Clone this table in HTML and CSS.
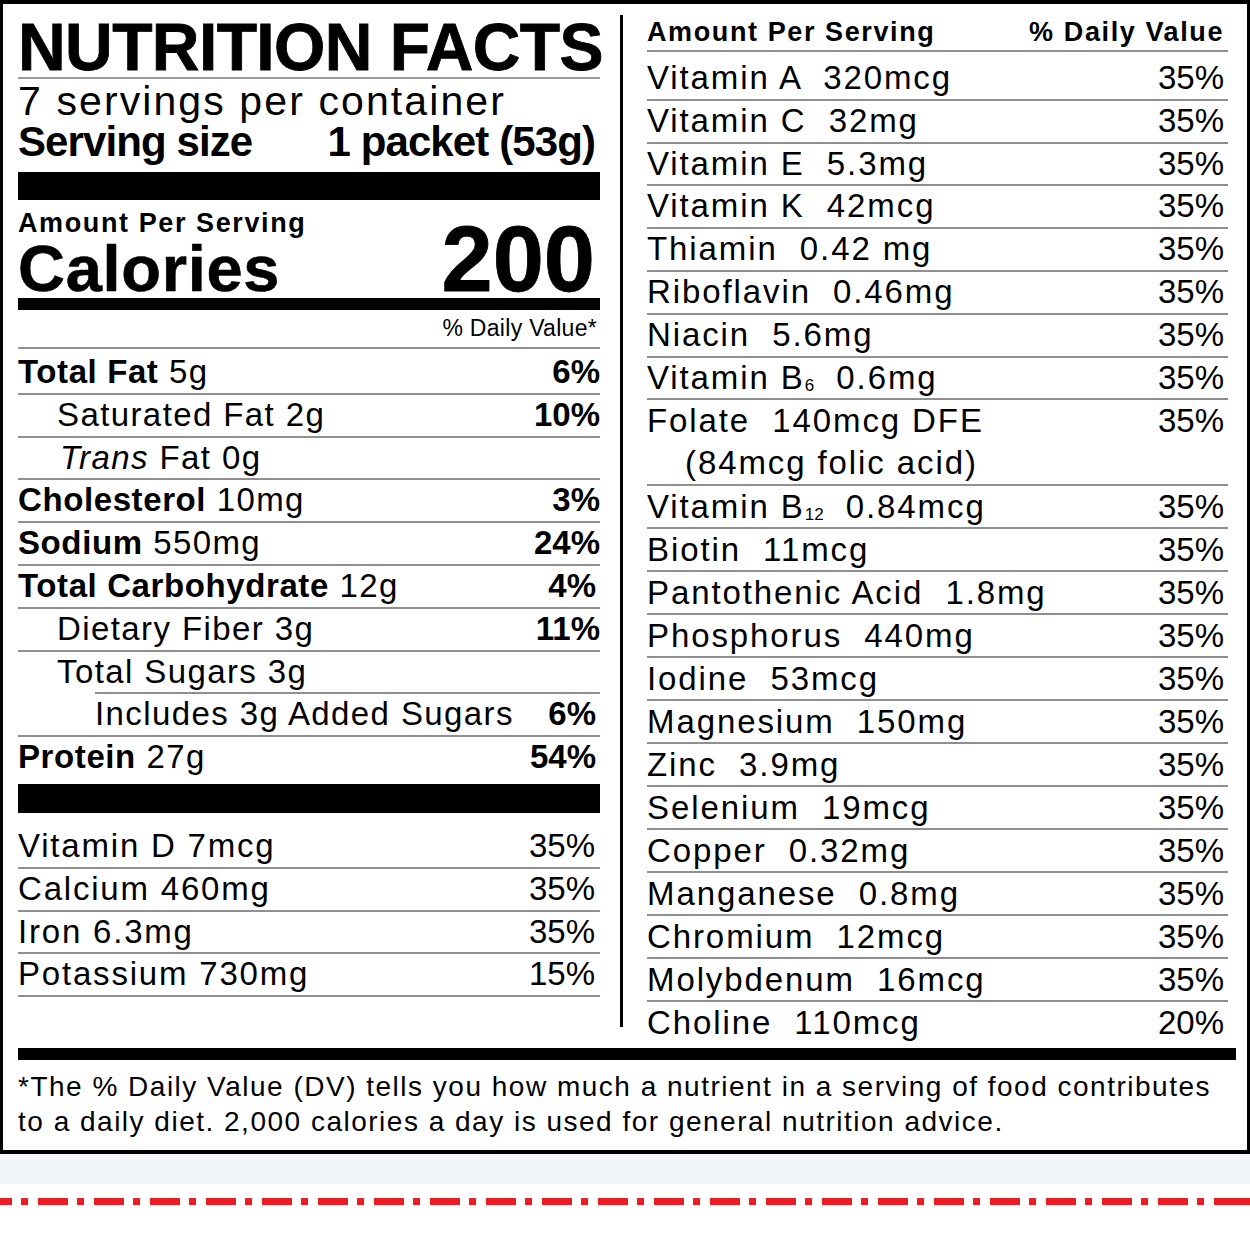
FILE: index.html
```html
<!DOCTYPE html>
<html lang="en">
<head>
<meta charset="utf-8">
<title>Nutrition Facts</title>
<link rel="stylesheet" href="styles.css">
</head>
<body>
<div class="label">
  <div class="top">
    <div class="left">
      <h1 class="title">NUTRITION FACTS</h1>
      <div class="servings">7 servings per container</div>
      <div class="size"><span>Serving size</span><span>1 packet (53g)</span></div>
      <div class="bar bar-lg"></div>
      <div class="aps">Amount Per Serving</div>
      <div class="cal"><span class="cal-name">Calories</span><span class="cal-num">200</span></div>
      <div class="bar bar-md"></div>
      <div class="dv-head">% Daily Value*</div>

      <div class="row first"><span class="nm"><b>Total Fat</b> 5g</span><span class="pct">6%</span></div>
      <div class="row ind1"><span class="nm">Saturated Fat 2g</span><span class="pct">10%</span></div>
      <div class="row ind1t"><span class="nm"><i>Trans</i> Fat 0g</span></div>
      <div class="row"><span class="nm"><b>Cholesterol</b> 10mg</span><span class="pct">3%</span></div>
      <div class="row"><span class="nm"><b>Sodium</b> 550mg</span><span class="pct">24%</span></div>
      <div class="row"><span class="nm"><b>Total Carbohydrate</b> 12g</span><span class="pct pr">4%</span></div>
      <div class="row ind1"><span class="nm">Dietary Fiber 3g</span><span class="pct">11%</span></div>
      <div class="row ind1 noline"><span class="nm">Total Sugars 3g</span></div>
      <div class="subrule"></div>
      <div class="row ind2"><span class="nm">Includes 3g Added Sugars</span><span class="pct pr">6%</span></div>
      <div class="row noline"><span class="nm"><b>Protein</b> 27g</span><span class="pct pr">54%</span></div>
      <div class="bar bar-lg2"></div>

      <div class="row micro first-micro"><span class="nm">Vitamin D 7mcg</span><span class="pct-r">35%</span></div>
      <div class="row micro"><span class="nm">Calcium 460mg</span><span class="pct-r">35%</span></div>
      <div class="row micro"><span class="nm">Iron 6.3mg</span><span class="pct-r">35%</span></div>
      <div class="row micro"><span class="nm">Potassium 730mg</span><span class="pct-r">15%</span></div>
    </div>

    <div class="divider"></div>

    <div class="right">
      <div class="rhead"><span>Amount Per Serving</span><span>% Daily Value</span></div>
      <div class="rrow first"><span class="nm">Vitamin A  320mcg</span><span class="pct-r">35%</span></div>
      <div class="rrow"><span class="nm">Vitamin C  32mg</span><span class="pct-r">35%</span></div>
      <div class="rrow"><span class="nm">Vitamin E  5.3mg</span><span class="pct-r">35%</span></div>
      <div class="rrow"><span class="nm">Vitamin K  42mcg</span><span class="pct-r">35%</span></div>
      <div class="rrow"><span class="nm">Thiamin  0.42 mg</span><span class="pct-r">35%</span></div>
      <div class="rrow"><span class="nm">Riboflavin  0.46mg</span><span class="pct-r">35%</span></div>
      <div class="rrow"><span class="nm">Niacin  5.6mg</span><span class="pct-r">35%</span></div>
      <div class="rrow"><span class="nm">Vitamin B<span class="sub">6</span>  0.6mg</span><span class="pct-r">35%</span></div>
      <div class="rrow folate">
        <div class="folate-main"><span class="nm">Folate  140mcg DFE</span><span class="pct-r">35%</span></div>
        <div class="folate-sub nm">(84mcg folic acid)</div>
      </div>
      <div class="rrow lower"><span class="nm">Vitamin B<span class="sub">12</span>  0.84mcg</span><span class="pct-r">35%</span></div>
      <div class="rrow lower"><span class="nm">Biotin  11mcg</span><span class="pct-r">35%</span></div>
      <div class="rrow lower"><span class="nm">Pantothenic Acid  1.8mg</span><span class="pct-r">35%</span></div>
      <div class="rrow lower"><span class="nm">Phosphorus  440mg</span><span class="pct-r">35%</span></div>
      <div class="rrow lower"><span class="nm">Iodine  53mcg</span><span class="pct-r">35%</span></div>
      <div class="rrow lower"><span class="nm">Magnesium  150mg</span><span class="pct-r">35%</span></div>
      <div class="rrow lower"><span class="nm">Zinc  3.9mg</span><span class="pct-r">35%</span></div>
      <div class="rrow lower"><span class="nm">Selenium  19mcg</span><span class="pct-r">35%</span></div>
      <div class="rrow lower"><span class="nm">Copper  0.32mg</span><span class="pct-r">35%</span></div>
      <div class="rrow lower"><span class="nm">Manganese  0.8mg</span><span class="pct-r">35%</span></div>
      <div class="rrow lower"><span class="nm">Chromium  12mcg</span><span class="pct-r">35%</span></div>
      <div class="rrow lower"><span class="nm">Molybdenum  16mcg</span><span class="pct-r">35%</span></div>
      <div class="rrow lower noline"><span class="nm">Choline  110mcg</span><span class="pct-r">20%</span></div>
    </div>
  </div>

  <div class="bar bar-bottom"></div>
  <p class="foot"><span class="foot-line">*The % Daily Value (DV) tells you how much a nutrient in a serving of food contributes</span><span class="foot-line">to a daily diet. 2,000 calories a day is used for general nutrition advice.</span></p>
</div>
<div class="band"></div>
<div class="dash"></div>
</body>
</html>
```

FILE: styles.css
```css
* {
  box-sizing: border-box;
  margin: 0;
  padding: 0;
}

body {
  margin: 0;
  background: #fff;
  color: #000;
  font-family: "Liberation Sans", Arial, Helvetica, sans-serif;
}

.label {
  width: 1250px;
  border: 3px solid #000;
  border-top-width: 4px;
  border-bottom-width: 4px;
  padding: 0 11px 0 15px;
  background: #fff;
}

.top {
  display: flex;
  align-items: flex-start;
}

.left {
  width: 582px;
}

.divider {
  width: 3px;
  margin-left: 20px;
  margin-top: 11px;
  margin-bottom: 16px;
  align-self: stretch;
  background: #000;
}

.right {
  width: 581px;
  margin-left: 24px;
}

/* ---------- left header ---------- */
.title {
  margin-top: 13px;
  font-size: 66px;
  font-weight: bold;
  line-height: 60px;
  letter-spacing: -0.6px;
  -webkit-text-stroke: 0.8px #000;
  border-bottom: 2px solid #9a9a9a;
  white-space: nowrap;
}

.servings {
  padding-top: 2px;
  font-size: 41px;
  line-height: 40px;
  letter-spacing: 2.1px;
  white-space: nowrap;
}

.size {
  display: flex;
  justify-content: space-between;
  padding-right: 5px;
  font-size: 42px;
  font-weight: bold;
  line-height: 42px;
  letter-spacing: -0.9px;
  white-space: nowrap;
}

.bar {
  background: #000;
}

.bar-lg {
  margin-top: 9px;
  height: 28px;
}

.aps {
  margin-top: 8px;
  font-size: 27px;
  font-weight: bold;
  line-height: 30px;
  letter-spacing: 1.6px;
  white-space: nowrap;
}

.cal {
  display: flex;
  justify-content: space-between;
  align-items: baseline;
  height: 60px;
  padding-right: 5px;
  font-weight: bold;
}

.cal-name {
  font-size: 65px;
  line-height: 54px;
  letter-spacing: 0.7px;
  -webkit-text-stroke: 0.6px #000;
}

.cal-num {
  font-size: 92px;
  line-height: 42px;
  -webkit-text-stroke: 0.8px #000;
}

.bar-md {
  height: 12px;
}

.dv-head {
  text-align: right;
  padding-right: 3px;
  font-size: 23px;
  line-height: 37px;
  letter-spacing: 0.3px;
  border-bottom: 2px solid #8f8f8f;
}

/* ---------- left rows ---------- */
.row {
  display: flex;
  justify-content: space-between;
  font-size: 33px;
  line-height: 40.8px;
  border-bottom: 2px solid #8f8f8f;
  white-space: nowrap;
}

.row .nm {
  letter-spacing: 1.4px;
}

.row .nm b {
  letter-spacing: 0.6px;
}

.row.first {
  padding-top: 3px;
}

.row.noline {
  border-bottom: none;
}

.ind1 {
  padding-left: 39px;
}

.ind1t {
  padding-left: 42px;
}

.ind2 {
  padding-left: 77px;
}

.pct {
  font-weight: bold;
}

.pct.pr {
  padding-right: 4px;
}

.subrule {
  margin-left: 77px;
  height: 2px;
  background: #8f8f8f;
}

.bar-lg2 {
  margin-top: 6px;
  height: 29px;
}

.row.micro {
  padding-right: 5px;
}

.row.micro .nm {
  letter-spacing: 1.8px;
}

.row.first-micro {
  padding-top: 13px;
}

/* ---------- right column ---------- */
.rhead {
  display: flex;
  justify-content: space-between;
  padding: 10px 4px 0 0;
  font-size: 27px;
  font-weight: bold;
  line-height: 36px;
  letter-spacing: 1.6px;
  border-bottom: 2px solid #8f8f8f;
  white-space: nowrap;
}

.rrow {
  display: flex;
  justify-content: space-between;
  padding-right: 4px;
  font-size: 33px;
  line-height: 40.8px;
  border-bottom: 2px solid #8f8f8f;
  white-space: nowrap;
}

.rrow.lower {
  line-height: 41px;
}

.rrow .nm,
.folate-sub {
  white-space: pre;
  letter-spacing: 1.9px;
}

.rrow.first {
  padding-top: 6px;
}

.rrow.noline {
  border-bottom: none;
}

.rrow.folate {
  display: block;
  line-height: 42px;
}

.folate-main {
  display: flex;
  justify-content: space-between;
}

.folate-sub {
  padding-left: 38px;
}

.sub {
  font-size: 17px;
  line-height: 0;
  letter-spacing: 0;
  vertical-align: -2px;
}

/* ---------- bottom ---------- */
.bar-bottom {
  margin-top: 5px;
  height: 12px;
}

.foot {
  margin-top: 9px;
  padding-bottom: 11px;
  font-size: 28px;
  line-height: 35px;
  letter-spacing: 1.5px;
}

.foot-line {
  display: block;
  white-space: nowrap;
}

.band {
  height: 30px;
  background: #f3f6f9;
}

.dash {
  margin-top: 14px;
  height: 7px;
  background: repeating-linear-gradient(90deg,
      #ee1d25 0 30px,
      transparent 30px 39px,
      #ee1d25 39px 46px,
      transparent 46px 56px);
  background-position: -18px 0;
}
```
